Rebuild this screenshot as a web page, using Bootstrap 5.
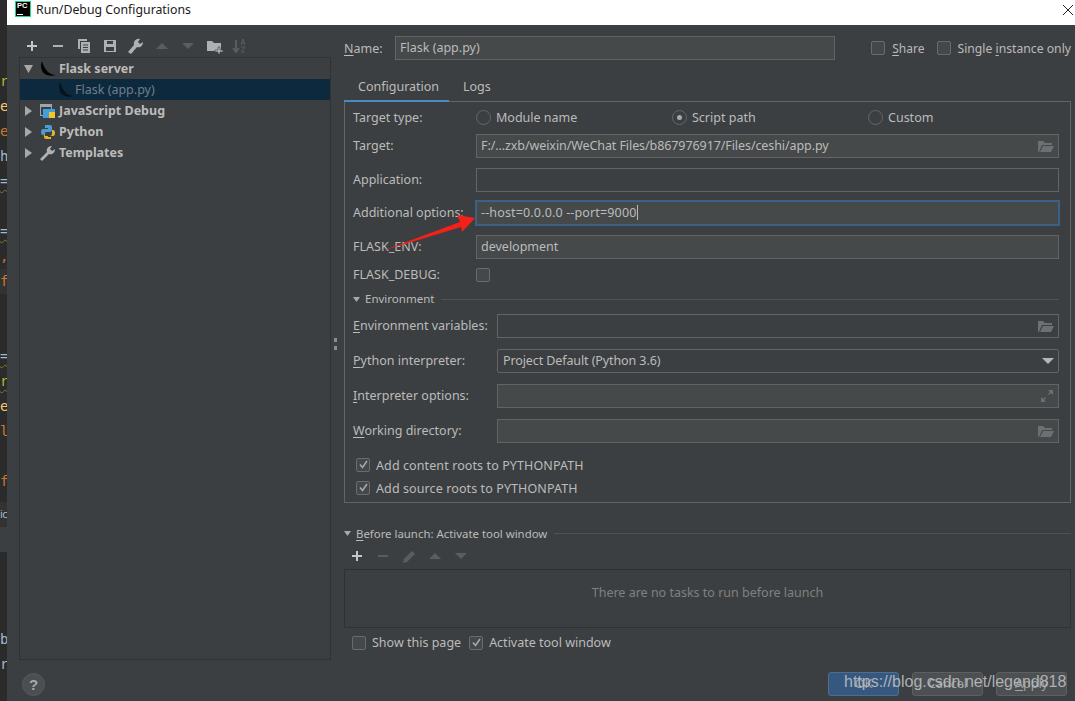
<!DOCTYPE html>
<html lang="en">
<head>
  <meta charset="UTF-8" />
  <meta name="viewport" content="width=device-width, initial-scale=1.0"/>
  <title>Run/Debug Configurations</title>
  <link href="https://cdn.jsdelivr.net/npm/bootstrap@5.3.0/dist/css/bootstrap.min.css" rel="stylesheet"/>
  <style>
    html, body { height: 701px; overflow: hidden; }
    body {
      background-color: #2b2b2b;
      color: #bbbbbb;
      font-family: "Noto Sans", "Noto Sans CJK SC", sans-serif;
      font-size: 12.5px;
      line-height: 18px;
    }
    u { text-underline-offset: 2px; }

    /* editor sliver behind the dialog */
    .editor-strip {
      width: 7px;
      flex: none;
      padding-top: 69px;
      overflow: hidden;
      font-family: "DejaVu Sans Mono", monospace;
      font-size: 14px;
    }
    .code-line { height: 25px; line-height: 25px; white-space: nowrap; }
    .code-line.gutter { background: #323232; }
    .code-line.gutter-2 { background: #3c3f41; }
    .code-line.wavy { text-decoration: underline wavy #7d7434 1px; text-underline-offset: 3px; }
    .code-line.tiny { font: 11px/23px "Noto Sans", sans-serif; letter-spacing: -.5px; }
    .c-y { color: #bbb529; }
    .c-g { color: #ffc66d; }
    .c-o { color: #cc7832; }
    .c-w { color: #a9b7c6; }

    .dialog { width: 1068px; background: #3c3f41; }
    .title-bar { height: 25px; background: #fff; color: #1a1a1a; padding: 1px 1px 0 8px; font-size: 12.3px; align-items: flex-start; }
    .title-bar span { line-height: 18px; }
    .title-bar svg { margin-top: 3px; }
    .pc-logo {
      width: 16px; height: 16px; background: #000; border: 1px solid #21d789; color: #fff;
      font: 700 7.5px/8px "Liberation Sans", sans-serif; padding-left: 1px; position: relative; margin-right: 5px;
    }
    .pc-logo::after { content: ""; position: absolute; left: 1px; bottom: 1px; width: 6px; height: 1px; background: #fff; }

    .main-area { height: 637px; }
    .left-side { width: 324px; padding: 9px 0 0 12px; flex: none; }
    .tool-row { height: 23px; padding-left: 3px; gap: 6px; }
    .tool-row svg { width: 20px; height: 16px; flex: none; }
    .tree-box { width: 312px; height: 603px; border: 1px solid #323232; margin: 0; padding: 0; }
    .tree-row { height: 21px; padding: 0; background: transparent; border: 0; color: #bbbbbb; font-weight: 700; line-height: 21px; }
    .tree-row.selected { background: #0d293e; color: #6f7f8b; font-weight: 400; }
    .tree-arrow { width: 9px; height: 10px; margin-left: 4px; margin-right: 7px; flex: none; }
    .tree-icon { width: 16px; height: 16px; flex: none; margin-right: 3px; }
    .child-icon { margin-left: 38px; margin-right: 1px; width: 16px; height: 16px; flex: none; }
    .splitter { width: 13px; flex: none; padding-right: 4px; }
    .splitter i { display: block; width: 1px; height: 12px; border-left: 3px dotted #8a8d8f; }

    .right-side { width: 727px; padding-top: 11px; flex: none; }
    .name-row { height: 24px; }
    .name-row > span { padding-top: 1px; }
    .name-label { width: 51px; }
    .name-field { width: 440px; }
    .ide-field.form-control {
      height: 24px; min-height: 0; padding: 0 4px; background: #45494a; border: 1px solid #646464; border-radius: 0;
      color: #bbbbbb; font-size: 12.5px; line-height: 22px; display: flex; align-items: center; justify-content: space-between;
    }
    .ide-field.blank { background: #3c3f41; }
    .ide-field.focused { border: 2px solid #3d6185; height: 26px; margin: -1px; box-shadow: none; flex: 1; width: auto; letter-spacing: .15px; }
    .ide-field.combo { background: #3c3f41; border-radius: 2px; padding-left: 5px; letter-spacing: -.1px; }
    .ide-field.path-field { letter-spacing: -.085px; }
    .caret-bar { display: inline-block; width: 1px; height: 15px; background: #bbb; vertical-align: -3px; }
    .ide-check {
      width: 14px; height: 14px; border: 1px solid #6b6b6b; border-radius: 2px; background: #43494a; flex: none;
      display: flex; align-items: center; justify-content: center; margin-right: 6px;
    }
    .ide-check svg { width: 11px; height: 11px; }
    .share-check { margin-right: 7px; }
    .share-text { margin-right: 13px; font-size: 12px; }
    .single-text { font-size: 12.2px; }
    .ide-radio { width: 15px; height: 15px; border: 1px solid #666; border-radius: 50%; background: #3c3f41; flex: none; margin-right: 5px; display: flex; align-items: center; justify-content: center; }
    .ide-radio i { display: block; width: 5px; height: 5px; background: #a9a9a9; border-radius: 50%; }
    .type-label { width: 123px; }

    .tab-strip { height: 42px; padding-top: 16px; border: 0; }
    .tab-item { height: 26px; line-height: 22px; padding: 0 14px; }
    .tab-item.active-tab { width: 105px; border-bottom: 2px solid #4a88c7; position: relative; z-index: 1; }
    .config-panel { width: 727px; height: 402px; border: 1px solid #646464; margin-top: -1px; padding: 4px 11px 0 8px; }
    .form-line { height: 24px; }
    .form-line .lbl-a { width: 123px; flex: none; }
    .form-line .lbl-b { width: 144px; flex: none; }
    .radio-line { height: 23px; }
    .radio-item { width: 196px; }
    .sect-head { height: 18px; font-size: 11.5px; margin-top: 3px; color: #bbb; }
    .sect-head.before-head { height: 19px; font-size: 11.4px; margin-top: 0; }
    .sect-line { flex: 1; height: 1px; background: #515151; margin-left: 7px; }
    .tri-down { width: 7px; height: 5px; margin-right: 5px; flex: none; }
    .gap-a { margin-top: 10px; }
    .gap-b { margin-top: 11px; }
    .check-line { height: 23px; padding: 0 0 0 3px; letter-spacing: .1px; }
    .check-line .ide-check { margin-top: 0; }
    .check-text { padding-top: 2px; }
    .before-section { margin-top: 21px; }
    .tasks-box { height: 59px; width: 727px; border: 1px solid #2f3133; color: #808080; padding-bottom: 11px; }
    .tool-small { height: 26px; padding-left: 3px; gap: 6px; align-items: center; }
    .tool-small svg { width: 20px; height: 16px; flex: none; }
    .bottom-checks { height: 29px; padding-left: 8px; }

    .footer-row { height: 39px; padding: 5px 8px 0 15px; position: relative; }
    .help-btn {
      width: 23px; height: 23px; border-radius: 50%; background: #4b4f51; border: 1px solid #55595b; color: #a8a8a8;
      font: 700 15px/21px "Liberation Sans", sans-serif; text-align: center; padding: 0;
    }
    .dlg-btn.btn {
      width: 71px; height: 24px; padding: 0; margin-left: 13px; border-radius: 3px; font-size: 12.5px; line-height: 22px;
      background: #4c5052; border: 1px solid #5e6060; color: #a4a4a4;
    }
    .dlg-btn.btn.primary-btn { background: #365880; border-color: #4c708c; }
    .watermark {
      position: absolute; left: 837px; top: 9px; color: #b8bbbd; opacity: .92;
      font: 16px/22px "Liberation Sans", Arial, sans-serif; white-space: nowrap;
    }
    .red-arrow { position: absolute; left: 375px; top: 205px; width: 105px; height: 55px; }
  </style>
</head>
<body class="d-flex">
  <div class="editor-strip">
    <div class="code-line c-y">r</div>
    <div class="code-line c-g">e</div>
    <div class="code-line c-o">e</div>
    <div class="code-line c-w">h</div>
    <div class="code-line c-w wavy">=</div>
    <div class="code-line"></div>
    <div class="code-line c-w wavy">=</div>
    <div class="code-line c-o">,</div>
    <div class="code-line c-o gutter">f</div>
    <div class="code-line"></div>
    <div class="code-line"></div>
    <div class="code-line c-w wavy">=</div>
    <div class="code-line c-y wavy">r</div>
    <div class="code-line c-g">e</div>
    <div class="code-line c-o">l</div>
    <div class="code-line"></div>
    <div class="code-line c-o">f</div>
    <div class="code-line c-w gutter tiny mt-2">ic</div>
    <div class="code-line gutter-2"></div>
    <div class="code-line"></div>
    <div class="code-line"></div>
    <div class="code-line"></div>
    <div class="code-line c-w">b</div>
    <div class="code-line c-w">r</div>
  </div>

  <div class="dialog d-flex flex-column">
    <div class="title-bar d-flex">
      <div class="pc-logo">PC</div>
      <span>Run/Debug Configurations</span>
      <svg class="ms-auto" width="12" height="12" viewBox="0 0 12 12"><path d="M1 1l10 10M11 1L1 11" stroke="#222" fill="none"/></svg>
    </div>

    <div class="main-area d-flex">
      <div class="left-side">
        <div class="tool-row d-flex align-items-center">
          <svg viewBox="0 0 20 16"><path d="M5 8h10M10 3v10" stroke="#c4c6c8" stroke-width="2" fill="none"/></svg>
          <svg viewBox="0 0 20 16"><path d="M5 8h10" stroke="#aeb0b2" stroke-width="2" fill="none"/></svg>
          <svg viewBox="0 0 20 16"><path d="M4 1h9v2H6v8H4zM7 4h9v11H7z" fill="#aeb0b2"/><path d="M9 7h5M9 9.5h5M9 12h5" stroke="#3c3f41"/></svg>
          <svg viewBox="0 0 20 16"><path d="M4 2h12v12H4z" fill="#aeb0b2"/><path d="M7 3h6v3H7zM6 9h8v4H6z" fill="#3c3f41"/></svg>
          <svg viewBox="0 0 20 16"><path d="M2 14l6-7C7 4 10 0 14 1l-2 3 2 2 3-2c0 4-3 6-6 5l-6 7z" fill="#aeb0b2"/></svg>
          <svg viewBox="0 0 20 16"><path d="M4 11l6-6 6 6z" fill="#5a5d5f"/></svg>
          <svg viewBox="0 0 20 16"><path d="M4 5l6 6 6-6z" fill="#5a5d5f"/></svg>
          <svg viewBox="0 0 20 16"><path d="M3 3h5l2 2h7v8H3z" fill="#aeb0b2"/><path d="M14 9h2v3h3v2h-3v2h-2v-2h-3v-2h3z" fill="#aeb0b2" stroke="#3c3f41" stroke-width=".6"/></svg>
          <svg viewBox="0 0 20 16"><path d="M6 2v11M3 10l3 4 3-4" stroke="#5a5d5f" stroke-width="2" fill="none"/><path d="M11 7l2-6 2 6M12 5h2M11 9h4l-4 5h4" stroke="#5a5d5f" fill="none"/></svg>
        </div>

        <ul class="tree-box list-group list-group-flush">
          <li class="tree-row list-group-item d-flex align-items-center">
            <svg class="tree-arrow" viewBox="0 0 9 10"><path d="M0 1h9L4.5 9z" fill="#a8a8a8"/></svg>
            <svg class="tree-icon" viewBox="0 0 16 16"><path d="M2 0C0 5 1 12 7 14c3 1 6 1 9 0-3 0-6-1-8-3C5 8 3 4 2 0z" fill="#000"/></svg>
            Flask server
          </li>
          <li class="tree-row selected list-group-item d-flex align-items-center">
            <svg class="child-icon" viewBox="0 0 16 16"><path d="M2 0C0 5 1 12 7 14c3 1 6 1 9 0-3 0-6-1-8-3C5 8 3 4 2 0z" fill="#06121c"/></svg>
            Flask (app.py)
          </li>
          <li class="tree-row list-group-item d-flex align-items-center">
            <svg class="tree-arrow" viewBox="0 0 9 10"><path d="M1 0v10l7-5z" fill="#a8a8a8"/></svg>
            <svg class="tree-icon" viewBox="0 0 16 16"><path d="M0 1h12v12H0z" fill="#9aa7b0"/><path d="M1 4h10v8H1z" fill="#3c3f41"/><path d="M3 6h12v9H3z" fill="#40a0dc"/><path d="M9 9h6v6H9z" fill="#f4c430"/></svg>
            JavaScript Debug
          </li>
          <li class="tree-row list-group-item d-flex align-items-center">
            <svg class="tree-arrow" viewBox="0 0 9 10"><path d="M1 0v10l7-5z" fill="#a8a8a8"/></svg>
            <svg class="tree-icon" viewBox="0 0 16 16"><path d="M5 1h5q2 0 2 2v3q0 2-2 2H6q-1 0-1 2v1H3Q1 11 1 8t2-3h5V4H5z" fill="#4b9ad0"/><path d="M11 15H6q-2 0-2-2v-2h1v1h5q2 0 2-2V6h1q2 0 2 3t-2 3H8v1h3z" fill="#e6b422"/></svg>
            Python
          </li>
          <li class="tree-row list-group-item d-flex align-items-center">
            <svg class="tree-arrow" viewBox="0 0 9 10"><path d="M1 0v10l7-5z" fill="#a8a8a8"/></svg>
            <svg class="tree-icon" viewBox="0 0 16 16"><path d="M0 14l7-7C6 4 8 1 12 1l-2 3 2 2 3-2c0 4-3 6-6 5l-7 7z" fill="#aeb0b2"/></svg>
            Templates
          </li>
        </ul>
      </div>

      <div class="splitter d-flex align-items-center justify-content-center"><i></i></div>

      <div class="right-side">
        <div class="name-row d-flex align-items-center">
          <span class="name-label"><u>N</u>ame:</span>
          <div class="ide-field form-control name-field">Flask (app.py)</div>
          <div class="ide-check share-check ms-auto"></div>
          <span class="share-text"><u>S</u>hare</span>
          <div class="ide-check"></div>
          <span class="single-text">Single <u>i</u>nstance only</span>
        </div>

        <div class="tab-strip nav d-flex">
          <div class="tab-item active-tab nav-item">Configuration</div>
          <div class="tab-item nav-item">Logs</div>
        </div>

        <div class="config-panel">
          <div class="radio-line d-flex align-items-center">
            <span class="type-label">Target type:</span>
            <div class="radio-item d-flex align-items-center"><div class="ide-radio"></div>Module name</div>
            <div class="radio-item d-flex align-items-center"><div class="ide-radio"><i></i></div>Script path</div>
            <div class="d-flex align-items-center"><div class="ide-radio"></div>Custom</div>
          </div>
          <div class="form-line d-flex align-items-center" style="margin-top:5px">
            <span class="lbl-a">Target:</span>
            <div class="ide-field form-control path-field">F:/...zxb/weixin/WeChat Files/b867976917/Files/ceshi/app.py
              <svg width="16" height="13" viewBox="0 0 16 13"><path d="M0 1h5l2 2h7v2H4L1 12H0z M5 6h11l-3 6H2z" fill="#6b7074"/></svg>
            </div>
          </div>
          <div class="form-line d-flex align-items-center gap-a">
            <span class="lbl-a">Application:</span>
            <div class="ide-field form-control blank"></div>
          </div>
          <div class="form-line d-flex align-items-center" style="margin-top:9px">
            <span class="lbl-a">Additional options:</span>
            <div class="ide-field form-control focused justify-content-start"><span>--host=0.0.0.0 --port=9000<span class="caret-bar"></span></span></div>
          </div>
          <div class="form-line d-flex align-items-center" style="margin-top:10px">
            <span class="lbl-a">FLASK_ENV:</span>
            <div class="ide-field form-control">development</div>
          </div>
          <div class="form-line d-flex align-items-center" style="margin-top:4px">
            <span class="lbl-a">FLASK_DEBUG:</span>
            <div class="ide-check"></div>
          </div>
          <div class="sect-head d-flex align-items-center">
            <svg class="tri-down" viewBox="0 0 7 5"><path d="M0 0h7L3.5 5z" fill="#a8a8a8"/></svg>
            Environment<span class="sect-line"></span>
          </div>
          <div class="form-line d-flex align-items-center" style="margin-top:6px">
            <span class="lbl-b"><u>E</u>nvironment variables:</span>
            <div class="ide-field form-control blank justify-content-end">
              <svg width="16" height="13" viewBox="0 0 16 13"><path d="M0 1h5l2 2h7v2H4L1 12H0z M5 6h11l-3 6H2z" fill="#6b7074"/></svg>
            </div>
          </div>
          <div class="form-line d-flex align-items-center gap-b">
            <span class="lbl-b"><u>P</u>ython interpreter:</span>
            <div class="ide-field form-control combo">Project Default (Python 3.6)
              <svg width="12" height="6" viewBox="0 0 12 6"><path d="M0 0h12L6 6z" fill="#b4b6b8"/></svg>
            </div>
          </div>
          <div class="form-line d-flex align-items-center gap-b">
            <span class="lbl-b"><u>I</u>nterpreter options:</span>
            <div class="ide-field form-control justify-content-end">
              <svg width="14" height="14" viewBox="0 0 14 14"><path d="M8 1h5v5l-2-2-2 2-1-1 2-2zM6 13H1V8l2 2 2-2 1 1-2 2z" fill="#6b7074"/></svg>
            </div>
          </div>
          <div class="form-line d-flex align-items-center gap-b">
            <span class="lbl-b"><u>W</u>orking directory:</span>
            <div class="ide-field form-control justify-content-end">
              <svg width="16" height="13" viewBox="0 0 16 13"><path d="M0 1h5l2 2h7v2H4L1 12H0z M5 6h11l-3 6H2z" fill="#6b7074"/></svg>
            </div>
          </div>
          <div class="check-line d-flex align-items-center gap-a">
            <div class="ide-check"><svg viewBox="0 0 11 11"><path d="M2 5.5l2.5 3L9 2" stroke="#a8a8a8" stroke-width="1.6" fill="none"/></svg></div><span class="check-text">Add content roots to PYTHONPATH</span>
          </div>
          <div class="check-line d-flex align-items-center">
            <div class="ide-check"><svg viewBox="0 0 11 11"><path d="M2 5.5l2.5 3L9 2" stroke="#a8a8a8" stroke-width="1.6" fill="none"/></svg></div><span class="check-text">Add source roots to PYTHONPATH</span>
          </div>
        </div>

        <div class="before-section">
          <div class="sect-head before-head d-flex align-items-center">
            <svg class="tri-down" viewBox="0 0 7 5"><path d="M0 0h7L3.5 5z" fill="#a8a8a8"/></svg>
            <span><u>B</u>efore launch: Activate tool window</span><span class="sect-line"></span>
          </div>
          <div class="tool-small d-flex">
            <svg viewBox="0 0 20 16"><path d="M5 8h10M10 3v10" stroke="#c4c6c8" stroke-width="2" fill="none"/></svg>
            <svg viewBox="0 0 20 16"><path d="M5 8h10" stroke="#5a5d5f" stroke-width="2" fill="none"/></svg>
            <svg viewBox="0 0 20 16"><path d="M4 15l1-4 8-8 3 3-8 8z" fill="#5a5d5f"/></svg>
            <svg viewBox="0 0 20 16"><path d="M4 11l6-6 6 6z" fill="#5a5d5f"/></svg>
            <svg viewBox="0 0 20 16"><path d="M4 5l6 6 6-6z" fill="#5a5d5f"/></svg>
          </div>
          <div class="tasks-box d-flex align-items-center justify-content-center">There are no tasks to run before launch</div>
          <div class="bottom-checks d-flex align-items-center">
            <div class="ide-check"></div><span class="me-2">Show this page</span>
            <div class="ide-check"><svg viewBox="0 0 11 11"><path d="M2 5.5l2.5 3L9 2" stroke="#a8a8a8" stroke-width="1.6" fill="none"/></svg></div>Activate tool window
          </div>
        </div>
      </div>
    </div>

    <div class="footer-row d-flex align-items-center">
      <button class="help-btn">?</button>
      <button class="dlg-btn btn primary-btn ms-auto">OK</button>
      <button class="dlg-btn btn">Cancel</button>
      <button class="dlg-btn btn"><u>A</u>pply</button>
      <div class="watermark">https://blog.csdn.net/legend818</div>
    </div>
  </div>

  <svg class="red-arrow" viewBox="375 205 105 55"><path d="M382 251l78-29-3-7 18 3-13 14-1-5z" fill="#f4201a"/></svg>
</body>
</html>
